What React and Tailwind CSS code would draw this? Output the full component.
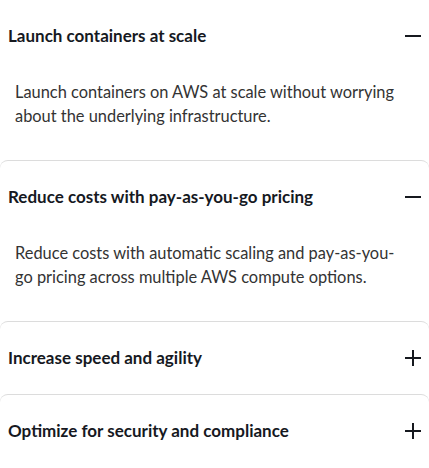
import React, { useState } from 'react';

const items = [
  {
    title: 'Launch containers at scale',
    body: 'Launch containers on AWS at scale without worrying about the underlying infrastructure.',
  },
  {
    title: 'Reduce costs with pay-as-you-go pricing',
    body: 'Reduce costs with automatic scaling and pay-as-you-go pricing across multiple AWS compute options.',
  },
  {
    title: 'Increase speed and agility',
    body: 'Deploy applications faster and focus on building while AWS manages the infrastructure.',
  },
  {
    title: 'Optimize for security and compliance',
    body: 'Run containers with built-in isolation and meet your security and compliance requirements.',
  },
];

function ToggleIcon({ open }) {
  return (
    <svg width="16" height="16" viewBox="0 0 16 16" className="shrink-0">
      <path d="M0 8h16" stroke="#16191f" strokeWidth="2" />
      {!open && <path d="M8 0v16" stroke="#16191f" strokeWidth="2" />}
    </svg>
  );
}

export default function App() {
  const [open, setOpen] = useState([true, true, false, false]);

  const toggle = (i) => setOpen(open.map((v, j) => (j === i ? !v : v)));

  return (
    <div
      className="w-[429px] bg-white"
      style={{ fontFamily: 'Lato, "Open Sans", sans-serif' }}
    >
      {items.map((item, i) => (
        <div
          key={item.title}
          className={i === 0 ? '' : 'border-t border-[#dcdcdc] rounded-t-[8px]'}
        >
          <button
            onClick={() => toggle(i)}
            className="w-full h-[72px] flex items-center justify-between px-2 text-left"
          >
            <span className="text-[17px] font-bold text-[#16191f]">{item.title}</span>
            <ToggleIcon open={open[i]} />
          </button>
          {open[i] && (
            <div className="pl-[15px] pr-[20px] pt-2 pb-8 text-[16.4px] leading-6 text-[#333]">
              {item.body}
            </div>
          )}
        </div>
      ))}
    </div>
  );
}
